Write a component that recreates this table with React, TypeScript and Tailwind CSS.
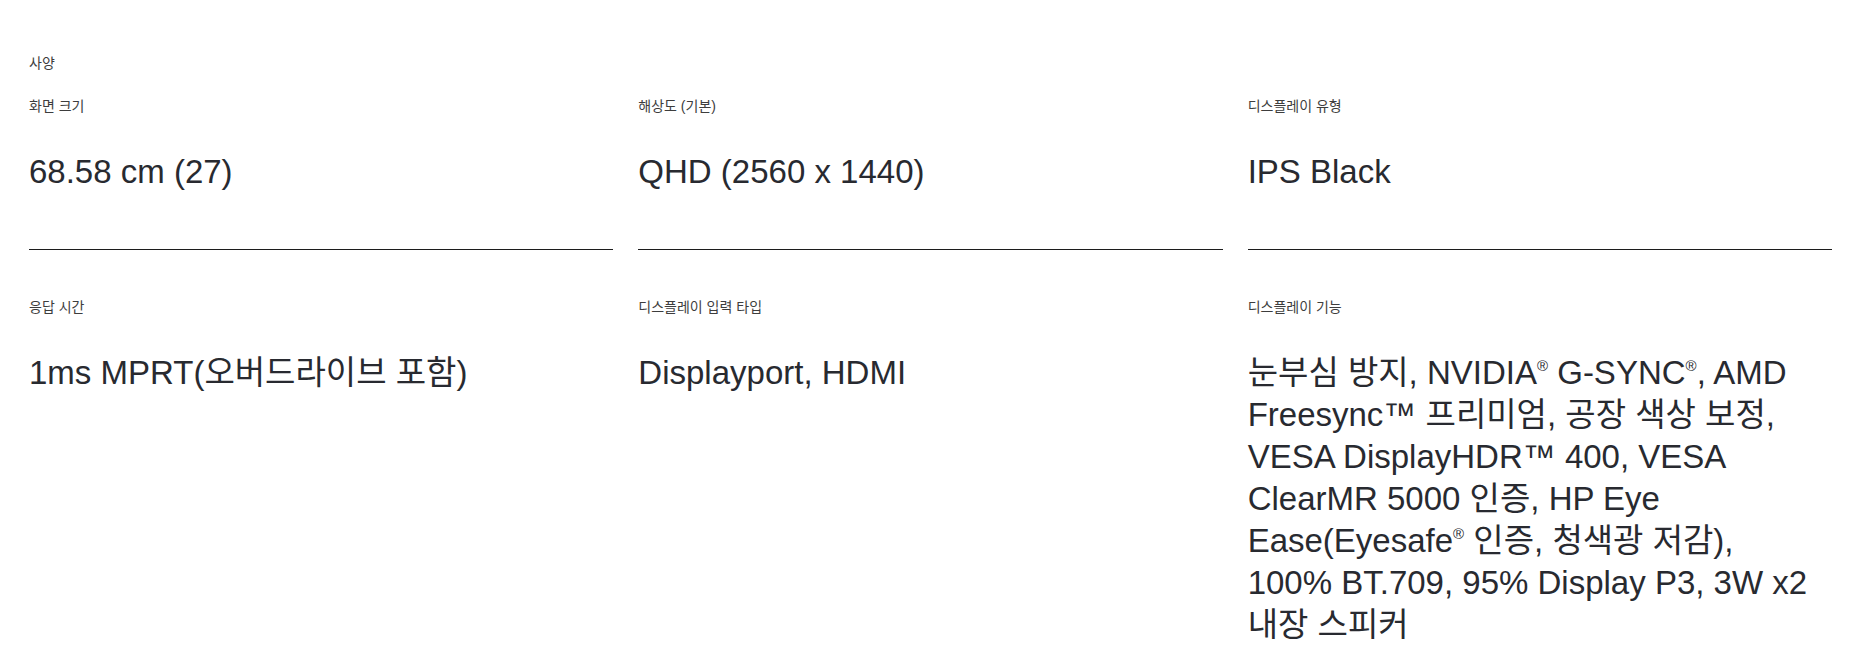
import type { ReactNode } from "react";

const FONT = "font-['Liberation_Sans','Noto_Sans_CJK_KR',sans-serif]";

const Reg = () => <span className="text-[15px] leading-none align-[13px]">®</span>;

type Spec = { label: string; value: ReactNode };

const SPECS: Spec[] = [
  { label: "화면 크기", value: "68.58 cm (27)" },
  { label: "해상도 (기본)", value: "QHD (2560 x 1440)" },
  { label: "디스플레이 유형", value: "IPS Black" },
  { label: "응답 시간", value: "1ms MPRT(오버드라이브 포함)" },
  { label: "디스플레이 입력 타입", value: "Displayport, HDMI" },
  {
    label: "디스플레이 기능",
    value: (
      <>
        눈부심 방지, NVIDIA<Reg /> G-SYNC<Reg />, AMD
        <br />
        Freesync™ 프리미엄, 공장 색상 보정,
        <br />
        VESA DisplayHDR™ 400, VESA
        <br />
        ClearMR 5000 인증, HP Eye
        <br />
        Ease(Eyesafe<Reg /> 인증, 청색광 저감),
        <br />
        100% BT.709, 95% Display P3, 3W x2
        <br />
        내장 스피커
      </>
    ),
  },
];

export default function App() {
  return (
    <div className={`min-h-screen bg-white px-[29px] pt-[53px] ${FONT}`}>
      <p className="text-[14px] leading-[20px] text-[#3d3d3d]">사양</p>
      <div className="mt-[23px] grid grid-cols-3 gap-x-[25px] gap-y-[47px]">
        {SPECS.map((s) => (
          <div key={s.label} className="border-b border-[#1c1c1c] pb-[56px]">
            <p className="text-[14px] leading-[20px] text-[#3d3d3d]">{s.label}</p>
            <p className="mt-[35px] break-keep text-[33px] leading-[42px] text-[#282a30]">{s.value}</p>
          </div>
        ))}
      </div>
    </div>
  );
}
